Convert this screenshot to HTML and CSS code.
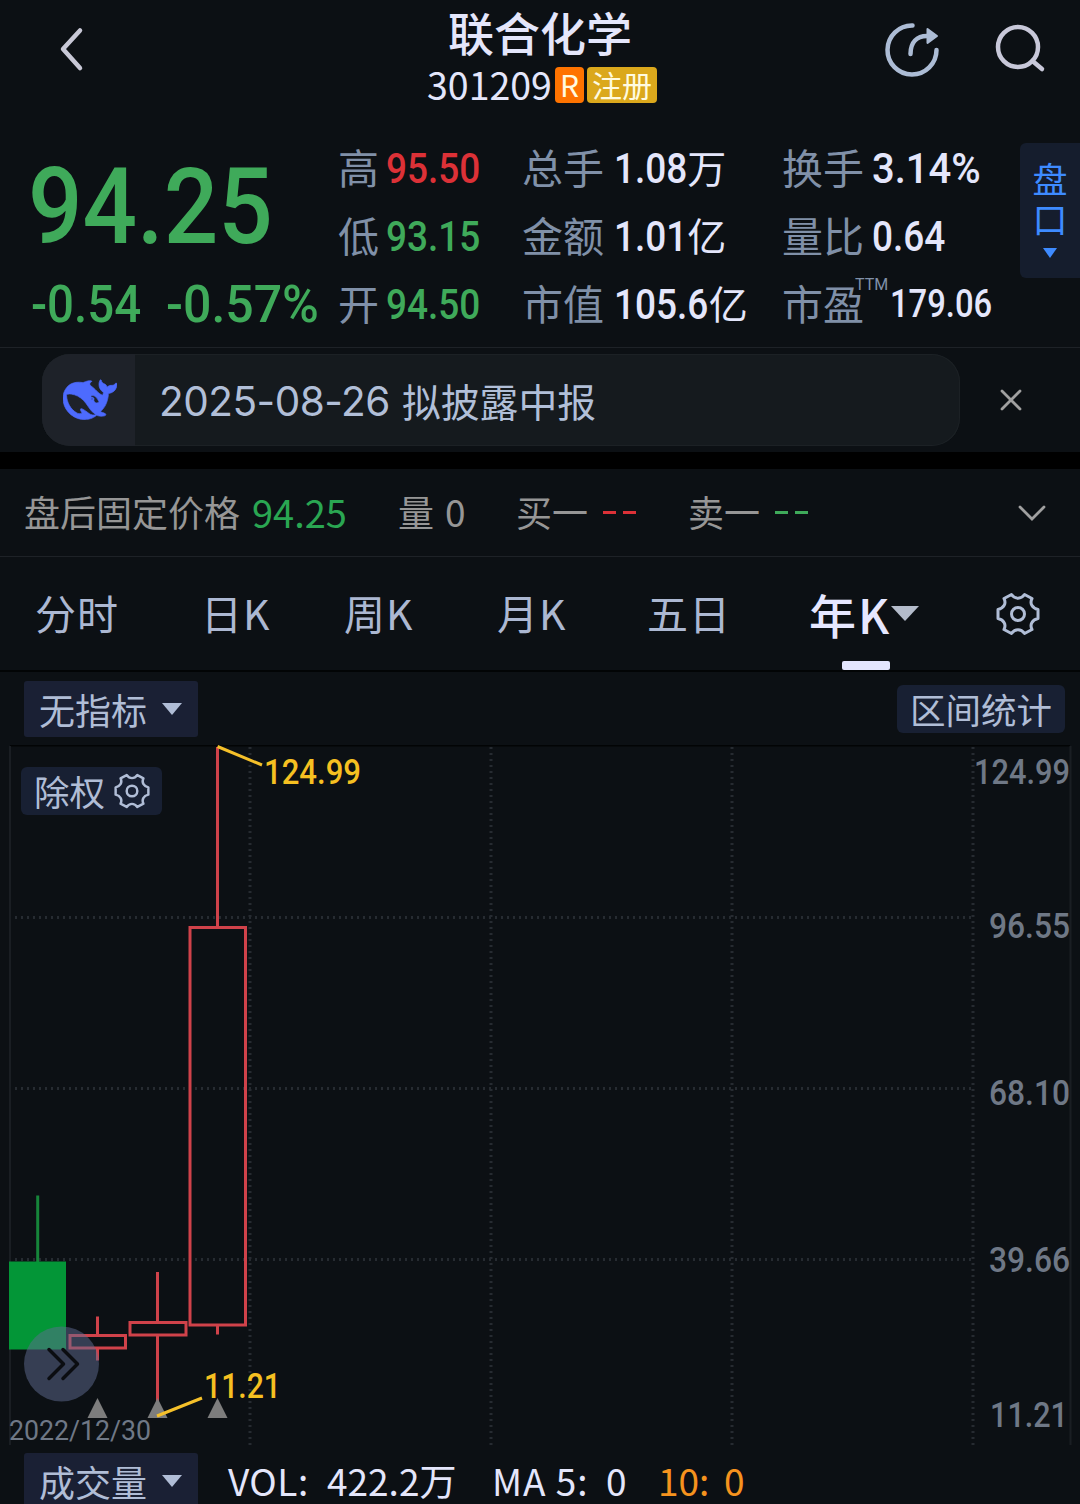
FILE: index.html
```html
<!DOCTYPE html>
<html lang="zh-CN">
<head>
  <meta charset="UTF-8">
  <title>联合化学 301209</title>
  <link rel="stylesheet" href="styles.css">
</head>
<body>
  <svg width="0" height="0" class="defs">
    <symbol id="gear" viewBox="-22 -22 44 44">
      <path d="M20-4.500V4.500C14 6 11.500 10.500 14 15.500L6.500 19.500C3 14.500-3 14.500-6.500 19.500L-14 15.500C-11.500 10.500-14 6-20 4.500V-4.500C-14-6-11.500-10.500-14-15.500L-6.500-19.500C-3-14.500 3-14.500 6.500-19.500L14-15.500C11.500-10.500 14-6 20-4.500Z"/>
      <circle r="6.5"/>
    </symbol>
  </svg>

  <header class="topbar">
    <svg class="back" width="26" height="46" viewBox="0 0 26 46"><path d="M21 3.500L4 22L21 41"/></svg>
    <div class="title">
      <h1>联合化学</h1>
      <div class="code">
        <span class="code-num">301209</span>
        <span class="tag tag-r">R</span>
        <span class="tag tag-reg">注册</span>
      </div>
    </div>
    <div class="actions">
      <svg class="share" width="56" height="56" viewBox="0 0 56 56">
        <path d="M28.500 3.500A24.500 24.500 0 1 0 52.500 28"/>
        <path d="M26.500 32C26.500 20 33 14 43 14"/>
        <path class="head" d="M43.500 7L53 14L43.500 21Z"/>
      </svg>
      <svg class="search" width="52" height="50" viewBox="0 0 52 50">
        <circle cx="24" cy="23" r="20"/>
        <path d="M38.500 37L48 45"/>
      </svg>
    </div>
  </header>

  <section class="quote">
    <div class="price">
      <div class="last">94.25</div>
      <div class="change"><span class="diff">-0.54</span><span class="pct">-0.57%</span></div>
    </div>
    <dl class="col col-a">
      <div><dt>高</dt><dd class="num up">95.50</dd></div>
      <div><dt>低</dt><dd class="num down">93.15</dd></div>
      <div><dt>开</dt><dd class="num down">94.50</dd></div>
    </dl>
    <dl class="col col-b">
      <div><dt>总手</dt><dd><span class="num">1.08</span><span class="unit">万</span></dd></div>
      <div><dt>金额</dt><dd><span class="num">1.01</span><span class="unit">亿</span></dd></div>
      <div><dt>市值</dt><dd><span class="num">105.6</span><span class="unit unit-far">亿</span></dd></div>
    </dl>
    <dl class="col col-c">
      <div><dt>换手</dt><dd class="num num-pct">3.14%</dd></div>
      <div><dt>量比</dt><dd class="num">0.64</dd></div>
      <div><dt>市盈<sup>TTM</sup></dt><dd class="num num-pe">179.06</dd></div>
    </dl>
    <div class="handle">
      <span>盘</span><span>口</span>
      <svg width="16" height="10" viewBox="0 0 16 10"><path d="M1 0H15L8 10Z"/></svg>
    </div>
  </section>

  <section class="notice">
    <div class="notice-bar">
      <div class="notice-logo">
        <svg width="54" height="54" viewBox="0 0 24 24"><path d="M23.748 4.482c-.254-.124-.364.113-.512.234-.051.039-.094.09-.137.136-.372.397-.806.657-1.373.626-.829-.046-1.537.214-2.163.848-.133-.782-.575-1.248-1.247-1.548-.352-.156-.708-.311-.955-.65-.172-.241-.219-.51-.305-.774-.055-.16-.11-.323-.293-.35-.2-.031-.278.136-.356.276-.313.572-.434 1.202-.422 1.84.027 1.436.633 2.58 1.838 3.393.137.093.172.187.129.323-.082.28-.18.552-.266.833-.055.179-.137.217-.329.14a5.526 5.526 0 01-1.736-1.18c-.857-.828-1.631-1.742-2.597-2.458a11.365 11.365 0 00-.689-.471c-.985-.957.13-1.743.388-1.836.27-.098.093-.432-.779-.428-.872.004-1.67.295-2.687.684a3.055 3.055 0 01-.465.137 9.597 9.597 0 00-2.883-.102c-1.885.21-3.39 1.102-4.497 2.623C.082 8.606-.231 10.684.152 12.85c.403 2.284 1.569 4.175 3.36 5.653 1.858 1.533 3.997 2.284 6.438 2.14 1.482-.085 3.133-.284 4.994-1.86.47.234.962.327 1.78.397.63.059 1.236-.03 1.705-.128.735-.156.684-.837.419-.961-2.155-1.004-1.682-.595-2.113-.926 1.096-1.296 2.746-2.642 3.392-7.003.05-.347.007-.565 0-.845-.004-.17.035-.237.23-.256a4.173 4.173 0 001.545-.475c1.396-.763 1.96-2.015 2.093-3.517.02-.23-.004-.467-.247-.588zM11.581 18c-2.089-1.642-3.102-2.183-3.52-2.16-.392.024-.321.471-.235.763.09.288.207.486.371.739.114.167.192.416-.113.603-.673.416-1.842-.14-1.897-.167-1.361-.802-2.5-1.86-3.301-3.307-.774-1.393-1.224-2.887-1.298-4.482-.02-.386.093-.522.477-.592a4.696 4.696 0 011.529-.039c2.132.312 3.946 1.265 5.468 2.774.868.86 1.525 1.887 2.202 2.891.72 1.066 1.494 2.082 2.48 2.914.348.292.625.514.891.677-.802.09-2.14.11-3.054-.614zm1-6.44a.306.306 0 01.415-.287.302.302 0 01.2.288.306.306 0 01-.31.307.303.303 0 01-.304-.308zm3.11 1.596c-.2.081-.399.151-.59.16a1.245 1.245 0 01-.798-.254c-.274-.23-.47-.358-.552-.758a1.73 1.73 0 01.016-.588c.07-.327-.008-.537-.239-.727-.187-.156-.426-.199-.688-.199a.559.559 0 01-.254-.078c-.11-.054-.2-.19-.114-.358.028-.054.16-.186.192-.21.356-.202.767-.136 1.146.016.352.144.618.408 1.001.782.391.451.462.576.685.914.176.265.336.537.445.848.067.195-.019.354-.25.452z"/></svg>
      </div>
      <p><span class="date">2025-08-26</span>拟披露中报</p>
    </div>
    <svg class="close" width="24" height="24" viewBox="0 0 24 24"><path d="M3 3L21 21M21 3L3 21"/></svg>
  </section>

  <section class="after">
    <span class="after-name">盘后固定价格</span>
    <span class="after-price">94.25</span>
    <span class="after-vol">量<i>0</i></span>
    <span class="after-side">买一</span><span class="dash up"></span>
    <span class="after-side after-sell">卖一</span><span class="dash down"></span>
    <svg class="chevron" width="30" height="18" viewBox="0 0 30 18"><path d="M3 3L15 15L27 3"/></svg>
  </section>

  <nav class="tabs">
    <a>分时</a>
    <a>日K</a>
    <a>周K</a>
    <a>月K</a>
    <a>五日</a>
    <a class="active">年K<svg width="28" height="15" viewBox="0 0 28 15"><path d="M0 0H28L14 15Z"/></svg></a>
    <svg class="gear" width="46" height="44"><use href="#gear"/></svg>
  </nav>

  <div class="toolbar">
    <button class="select">无指标<svg width="20" height="12" viewBox="0 0 20 12"><path d="M0 0H20L10 12Z"/></svg></button>
    <button class="chip">区间统计</button>
  </div>

  <section class="chart">
    <svg class="kline" width="1080" height="703" viewBox="0 745 1080 703">
      <path class="frame-top" d="M10 745.500H1070"/>
      <path class="frame" d="M10 746V1445M1070.500 746V1445"/>
      <g class="grid">
        <path d="M15 917.500H973M15 1088.500H973M15 1259.500H973"/>
        <path d="M250 747V1445M491 747V1445M732 747V1445M973 747V1445"/>
      </g>

      <!-- yearly candles -->
      <path class="wick-down" d="M37.700 1195.500V1262"/>
      <rect class="body-down" x="9" y="1261.500" width="57" height="88"/>
      <g class="candle-up">
        <path d="M97.500 1316.500V1335M97.500 1348V1360.500"/>
        <rect x="70" y="1335.500" width="55.500" height="12.500"/>
        <path d="M157.500 1272V1322M157.500 1336V1404"/>
        <rect x="130" y="1322.500" width="56" height="12.500"/>
        <path d="M217.500 747V927M217.500 1326V1334.500"/>
        <rect x="190" y="927.500" width="55.500" height="397.500"/>
      </g>
      <path class="marks" d="M97.500 1398L107.500 1418H87.500ZM157.500 1398L167.500 1418H147.500ZM217.500 1398L227.500 1418H207.500Z"/>
      <path class="leader" d="M217.500 746.500L262 765M157 1416L202 1398"/>

      <g class="peak">
        <text x="264" y="784" textLength="97" lengthAdjust="spacingAndGlyphs">124.99</text>
        <text x="204" y="1398" textLength="77" lengthAdjust="spacingAndGlyphs">11.21</text>
      </g>
      <g class="axis">
        <text x="974" y="784" textLength="96" lengthAdjust="spacingAndGlyphs">124.99</text>
        <text x="989" y="938" textLength="81" lengthAdjust="spacingAndGlyphs">96.55</text>
        <text x="989" y="1105" textLength="81" lengthAdjust="spacingAndGlyphs">68.10</text>
        <text x="989" y="1272" textLength="81" lengthAdjust="spacingAndGlyphs">39.66</text>
        <text x="990" y="1427" textLength="78" lengthAdjust="spacingAndGlyphs">11.21</text>
        <text class="day" x="9" y="1440" textLength="142" lengthAdjust="spacingAndGlyphs">2022/12/30</text>
      </g>

      <g class="expand">
        <circle cx="61.500" cy="1364" r="37.500"/>
        <path d="M49 1349.500L63.500 1364L49 1378.500M63 1349.500L77.500 1364L63 1378.500"/>
      </g>
    </svg>
    <button class="chip adjust">除权<svg width="38" height="36"><use href="#gear"/></svg></button>
  </section>

  <footer class="volume">
    <button class="select">成交量<svg width="20" height="12" viewBox="0 0 20 12"><path d="M0 0H20L10 12Z"/></svg></button>
    <span class="vol">VOL:</span>
    <span class="vol-num">422.2万</span>
    <span class="ma5">MA 5:</span>
    <span class="ma5-num">0</span>
    <span class="ma10">10:</span>
    <span class="ma10">0</span>
  </footer>
</body>
</html>
```

FILE: styles.css
```css
* {
  box-sizing: border-box;
}
body {
  margin: 0;
  width: 1080px;
  height: 1504px;
  overflow: hidden;
  background: #0c1014;
  color: #e4e6fb;
  font-family: "Noto Sans CJK SC", sans-serif;
  display: flex;
  flex-direction: column;
}
h1, p, dl, dd {
  margin: 0;
}
svg {
  display: block;
  flex: none;
}
.defs {
  position: absolute;
}
button {
  border: none;
  padding: 0;
  font: inherit;
  color: #b0bdd6;
}
.up {
  color: #dc3137;
}
.down {
  color: #3faa5a;
}

/* header */
.topbar {
  height: 134px;
  flex: none;
  display: grid;
  grid-template-columns: 360px 1fr 360px;
}
.back {
  margin: 27px 0 0 59px;
  fill: none;
  stroke: #c8c8d6;
  stroke-width: 4.5;
  stroke-linecap: round;
  stroke-linejoin: round;
}
.title {
  text-align: center;
}
.title h1 {
  font-size: 46px;
  font-weight: 500;
  line-height: 63px;
  height: 67px;
}
.code {
  display: flex;
  justify-content: center;
  gap: 3px;
  height: 37px;
  line-height: 37px;
  padding-left: 4px;
}
.code-num {
  font-size: 37.5px;
  line-height: 34px;
}
.tag {
  height: 36px;
  line-height: 35px;
  border-radius: 4px;
  color: #fffbe0;
  font-size: 30px;
}
.tag-r {
  width: 29px;
  background: #ff7300;
}
.tag-reg {
  width: 70px;
  background: #dba81c;
}
.actions {
  display: flex;
}
.share {
  margin: 22px 0 0 164px;
  fill: none;
  stroke: #acbcd5;
  stroke-width: 4.5;
  stroke-linecap: round;
}
.share .head {
  fill: #acbcd5;
  stroke-width: 2;
  stroke-linejoin: round;
}
.search {
  margin: 24px 0 0 54px;
  fill: none;
  stroke: #c8c8d9;
  stroke-width: 4.5;
  stroke-linecap: round;
}

/* quote */
.quote {
  height: 214px;
  flex: none;
  display: flex;
  border-bottom: 1px solid #1e2227;
}
.price {
  width: 338px;
  padding-left: 27px;
  color: #3faa5a;
  font-family: Roboto, sans-serif;
  font-weight: 500;
}
.last {
  font-size: 106px;
  line-height: 124px;
  margin: 11px 0 0 1px;
  transform: scaleX(.905);
  transform-origin: 0 0;
}
.change {
  display: flex;
  font-size: 51px;
  line-height: 60px;
  margin-top: 6px;
}
.diff, .pct {
  transform: scaleX(.93);
  transform-origin: 0 0;
}
.diff {
  width: 135px;
  margin-left: 4px;
}
.pct {
  transform: scaleX(.98);
}
.col {
  display: grid;
  grid-template-rows: repeat(3, 68px);
}
.col > div {
  display: flex;
  align-items: center;
}
.col-a {
  width: 184px;
}
.col-b {
  width: 260px;
}
.col-c {
  width: 238px;
}
dt {
  font-size: 41px;
  line-height: 60px;
  padding-bottom: 5px;
  color: #8090a8;
  position: relative;
  white-space: nowrap;
}
dd {
  display: flex;
  align-items: center;
  margin-left: 10px;
}
.num {
  font-family: Roboto, sans-serif;
  font-weight: 500;
  font-size: 43px;
  line-height: 60px;
  transform: scaleX(.86);
  transform-origin: 0 50%;
}
.col-a .num {
  margin-left: 7px;
}
.col-c .num {
  margin-left: 8px;
}
.col-c .num-pct {
  transform: scaleX(.93);
}
.col-c .num-pe {
  font-size: 39px;
  margin-left: 26px;
  transform: scaleX(.84);
}
.unit {
  font-size: 39px;
  line-height: 60px;
  padding-bottom: 4px;
  margin-left: -12px;
}
.unit-far {
  margin-left: -15px;
}
sup {
  position: absolute;
  left: 73px;
  top: 3px;
  font-family: Roboto, sans-serif;
  font-size: 16px;
  line-height: 20px;
}
.handle {
  width: 60px;
  height: 135px;
  margin-top: 9px;
  padding-top: 15px;
  border-radius: 6px 0 0 6px;
  background: #151d2d;
  color: #3e8bff;
  fill: #3e8bff;
  display: flex;
  flex-direction: column;
  align-items: center;
  font-size: 35px;
  line-height: 40px;
}
.handle svg {
  margin-top: 10px;
}

/* notice */
.notice {
  height: 121px;
  flex: none;
  display: flex;
  padding: 6px 0 0 42px;
  border-bottom: 17px solid #000;
}
.notice-bar {
  width: 918px;
  height: 92px;
  border-radius: 28px;
  overflow: hidden;
  background: #151a1e;
  box-shadow: inset 0 0 0 1px #1c2125;
  display: flex;
  align-items: center;
}
.notice-logo {
  width: 93px;
  height: 92px;
  padding-left: 3px;
  background: #1e2229;
  display: flex;
  align-items: center;
  justify-content: center;
  fill: #4d6bfe;
  stroke: #4d6bfe;
  stroke-width: .3;
}
.notice p {
  display: flex;
  align-items: center;
  margin: -1px 0 0 24px;
  color: #b1bfd8;
  font-size: 38.8px;
  white-space: nowrap;
}
.date {
  width: 243px;
  padding-top: 4px;
  font-family: Inter, sans-serif;
  font-size: 40.5px;
  letter-spacing: -.5px;
}
.close {
  margin: 34px 0 0 39px;
  fill: none;
  stroke: #a0a0a0;
  stroke-width: 2.8;
  stroke-linecap: round;
}

/* after-hours fixed price */
.after {
  height: 88px;
  flex: none;
  display: flex;
  align-items: center;
  padding-left: 24px;
  border-bottom: 1px solid #1e2227;
  color: #969696;
  font-size: 36px;
}
.after > span {
  margin-top: -3px;
}
.after .after-price {
  margin-left: 12px;
  width: 146px;
  color: #2aa652;
  font-size: 38px;
}
.after-vol {
  width: 118px;
}
.after-vol i {
  margin-left: 11px;
  font-style: normal;
  font-size: 37px;
}
.after .dash {
  width: 33px;
  height: 3px;
  margin: 0 0 0 15px;
  background: linear-gradient(90deg, currentColor 13px, transparent 13px 20px, currentColor 20px);
}
.after-sell {
  margin-left: 52px;
}
.chevron {
  margin-left: auto;
  margin-right: 33px;
  fill: none;
  stroke: #a0a0a0;
  stroke-width: 2.8;
  stroke-linecap: round;
}

/* period tabs */
.tabs {
  height: 115px;
  flex: none;
  display: grid;
  grid-template-columns: 166px 143px 153px 150px 162px 186px 1fr;
  align-items: center;
  padding-left: 35px;
  border-bottom: 2px solid #020405;
  color: #acb8d2;
  font-size: 41px;
}
.tabs a {
  height: 113px;
  line-height: 110px;
  position: relative;
  white-space: nowrap;
  letter-spacing: 1px;
}
.tabs .active {
  display: flex;
  align-items: center;
  color: #e6e7ff;
  font-size: 47px;
  font-weight: 500;
  letter-spacing: 2px;
  fill: #b4bccb;
}
.tabs .active::after {
  content: "";
  position: absolute;
  left: 33px;
  bottom: 0;
  width: 48px;
  height: 9px;
  border-radius: 2px;
  background: #e4e6ff;
}
.gear, .adjust svg {
  fill: none;
  stroke: #b0bdd6;
  stroke-width: 3;
  stroke-linejoin: round;
}

/* indicator row */
.toolbar {
  height: 73px;
  flex: none;
  display: flex;
  justify-content: space-between;
  padding: 9px 15px 0 24px;
}
.select {
  width: 174px;
  height: 56px;
  border-radius: 3px;
  background: #1a2034;
  font-size: 36px;
  line-height: 54px;
  display: flex;
  align-items: center;
  padding-left: 15px;
  padding-bottom: 1px;
  fill: #b0bdd6;
}
.select svg {
  margin-left: 15px;
}
.chip {
  height: 48px;
  border-radius: 6px;
  background: #182033;
  font-size: 35.5px;
  line-height: 48px;
}
.toolbar .chip {
  width: 168px;
  margin-top: 4px;
}

/* chart */
.chart {
  position: relative;
  height: 708px;
  flex: none;
}
.adjust {
  position: absolute;
  left: 21px;
  top: 22px;
  width: 141px;
  padding-left: 13px;
  display: flex;
  align-items: center;
  gap: 8px;
}
.frame-top {
  stroke: #020405;
  stroke-width: 2;
}
.frame {
  stroke: #1a1e23;
  stroke-width: 2;
}
.grid path {
  stroke: #262b31;
  stroke-width: 3;
  stroke-dasharray: 2 4;
}
.kline path, .kline rect {
  fill: none;
}
.wick-down {
  stroke: #16853a;
  stroke-width: 3;
}
.kline .body-down {
  fill: #039637;
}
.candle-up {
  stroke: #d0424a;
  stroke-width: 3;
}
.kline .marks {
  fill: #7d7d7d;
}
.leader {
  stroke: #f5c02a;
  stroke-width: 3;
}
.kline text {
  font-family: Roboto, sans-serif;
  font-size: 35px;
  font-weight: 500;
}
.peak {
  fill: #f6c021;
}
.axis {
  fill: #6f7886;
}
.kline .day {
  font-size: 28px;
  font-weight: 400;
}
.expand circle {
  fill: #606c91;
  fill-opacity: .5;
}
.expand path {
  stroke: #0b0d11;
  stroke-width: 3.5;
  stroke-linecap: round;
  stroke-linejoin: round;
}

/* volume row */
.volume {
  flex: 1;
  display: flex;
  padding-left: 24px;
  font-size: 37px;
  line-height: 54px;
  white-space: nowrap;
}
.vol {
  width: 99px;
  margin-left: 30px;
  letter-spacing: .5px;
}
.vol-num {
  width: 165px;
}
.ma5 {
  width: 114px;
  letter-spacing: 1px;
}
.ma5-num {
  width: 52px;
}
.ma10 {
  width: 66px;
  color: #f6931e;
}
```
